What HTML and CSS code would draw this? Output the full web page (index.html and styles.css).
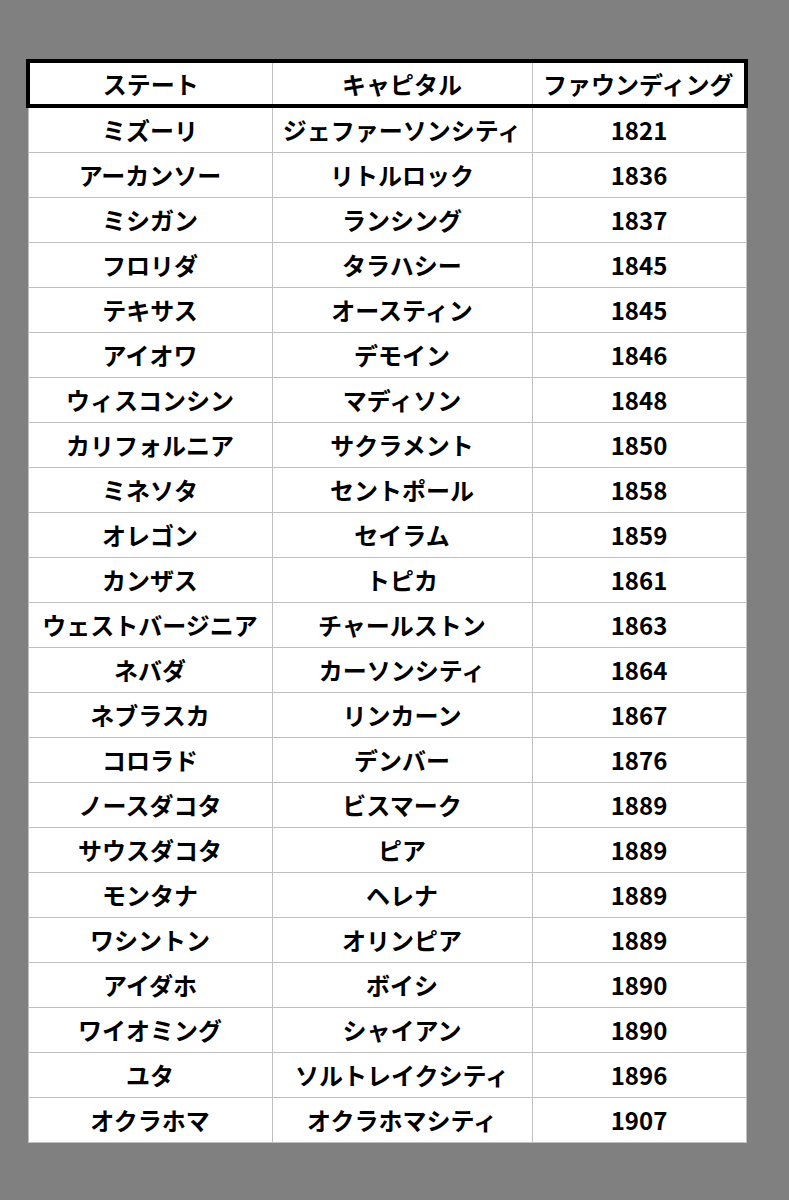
FILE: index.html
```html
<!DOCTYPE html>
<html lang="ja">
<head>
<meta charset="utf-8">
<link rel="stylesheet" href="styles.css">
</head>
<body>
<div class="page">
<table class="states">
<colgroup><col class="c1"><col class="c2"><col class="c3"></colgroup>
<thead>
<tr><th>ステート</th><th>キャピタル</th><th>ファウンディング</th></tr>
</thead>
<tbody>
<tr><td>ミズーリ</td><td>ジェファーソンシティ</td><td>1821</td></tr>
<tr><td>アーカンソー</td><td>リトルロック</td><td>1836</td></tr>
<tr><td>ミシガン</td><td>ランシング</td><td>1837</td></tr>
<tr><td>フロリダ</td><td>タラハシー</td><td>1845</td></tr>
<tr><td>テキサス</td><td>オースティン</td><td>1845</td></tr>
<tr><td>アイオワ</td><td>デモイン</td><td>1846</td></tr>
<tr><td>ウィスコンシン</td><td>マディソン</td><td>1848</td></tr>
<tr><td>カリフォルニア</td><td>サクラメント</td><td>1850</td></tr>
<tr><td>ミネソタ</td><td>セントポール</td><td>1858</td></tr>
<tr><td>オレゴン</td><td>セイラム</td><td>1859</td></tr>
<tr><td>カンザス</td><td>トピカ</td><td>1861</td></tr>
<tr><td>ウェストバージニア</td><td>チャールストン</td><td>1863</td></tr>
<tr><td>ネバダ</td><td>カーソンシティ</td><td>1864</td></tr>
<tr><td>ネブラスカ</td><td>リンカーン</td><td>1867</td></tr>
<tr><td>コロラド</td><td>デンバー</td><td>1876</td></tr>
<tr><td>ノースダコタ</td><td>ビスマーク</td><td>1889</td></tr>
<tr><td>サウスダコタ</td><td>ピア</td><td>1889</td></tr>
<tr><td>モンタナ</td><td>ヘレナ</td><td>1889</td></tr>
<tr><td>ワシントン</td><td>オリンピア</td><td>1889</td></tr>
<tr><td>アイダホ</td><td>ボイシ</td><td>1890</td></tr>
<tr><td>ワイオミング</td><td>シャイアン</td><td>1890</td></tr>
<tr><td>ユタ</td><td>ソルトレイクシティ</td><td>1896</td></tr>
<tr><td>オクラホマ</td><td>オクラホマシティ</td><td>1907</td></tr>
</tbody>
</table>
</div>
</body>
</html>
```

FILE: styles.css
```css
html, body {
  margin: 0;
  padding: 0;
  background: #808080;
}
.page {
  padding: 59px 0 0 26px;
  height: 1141px;
}
.states {
  border-collapse: collapse;
  font-family: "Noto Sans CJK JP", "Noto Sans", sans-serif;
  font-weight: 700;
  font-size: 24px;
  color: #000;
  table-layout: fixed;
}
.c1 { width: 244px; }
.c2 { width: 260px; }
.c3 { width: 214px; }
.states th, .states td {
  height: 44px;
  padding: 0;
  background: #ffffff;
  text-align: center;
  vertical-align: middle;
  line-height: 44px;
  border: 1px solid #c0c0c0;
  white-space: nowrap;
  overflow: hidden;
}
.states thead th {
  height: 41px;
  line-height: 41px;
  border-top: 4px solid #000;
  border-bottom: 4px solid #000;
  font-weight: 700;
}
.states thead th:first-child { border-left: 4px solid #000; }
.states thead th:last-child { border-right: 4px solid #000; }
```
